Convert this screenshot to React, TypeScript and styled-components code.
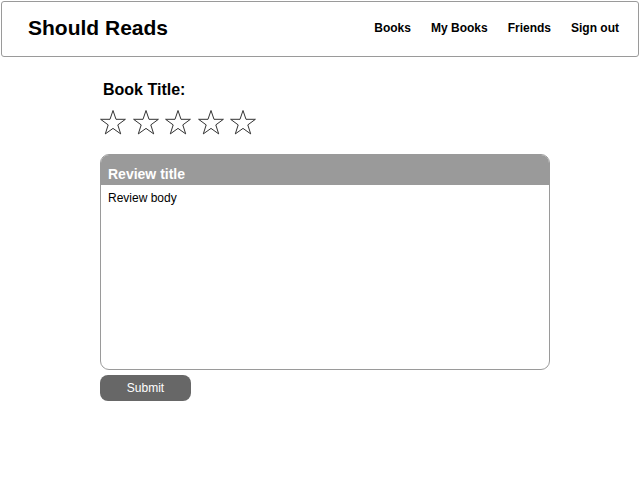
import { createGlobalStyle, styled } from "styled-components";

const GlobalStyle = createGlobalStyle`
  body {
    margin: 0;
    font-family: "Liberation Sans", Arial, sans-serif;
    background: #fff;
    color: #000;
  }
`;

const navItems = ["Books", "My Books", "Friends", "Sign out"];

const Star = () => (
  <svg width="28" height="28" viewBox="0 0 28 28">
    <polygon
      points="14,1.5 17,10.3 26.4,10.3 18.8,15.9 21.7,24.9 14,19.4 6.3,24.9 9.2,15.9 1.6,10.3 11,10.3"
      fill="none"
      stroke="#333"
      strokeWidth="1"
      strokeLinejoin="miter"
    />
  </svg>
);

export default function App() {
  return (
    <>
      <GlobalStyle />
      <Header>
        <Brand>Should Reads</Brand>
        <Nav>
          {navItems.map((item) => (
            <NavItem key={item}>{item}</NavItem>
          ))}
        </Nav>
      </Header>
      <Main>
        <BookTitle>Book Title:</BookTitle>
        <Stars>
          {[0, 1, 2, 3, 4].map((i) => (
            <Star key={i} />
          ))}
        </Stars>
        <ReviewCard>
          <ReviewTitle>Review title</ReviewTitle>
          <ReviewBody>Review body</ReviewBody>
        </ReviewCard>
        <SubmitButton>Submit</SubmitButton>
      </Main>
    </>
  );
}

const Header = styled.header`
  margin: 1px;
  height: 54px;
  border: 1px solid #9a9a9a;
  border-radius: 3px;
  display: flex;
  align-items: center;
  justify-content: space-between;
  padding: 0 19px 0 26px;
`;

const Brand = styled.div`
  font-size: 21px;
  font-weight: bold;
  margin-top: -2px;
`;

const Nav = styled.nav`
  display: flex;
  gap: 20px;
`;

const NavItem = styled.div`
  font-size: 12px;
  font-weight: bold;
  margin-top: -3px;
`;

const Main = styled.main`
  width: 450px;
  margin-left: 100px;
  padding-top: 23px;
`;

const BookTitle = styled.div`
  font-size: 16px;
  font-weight: bold;
  margin-left: 3px;
  line-height: 18px;
`;

const Stars = styled.div`
  display: flex;
  gap: 4.5px;
  margin-top: 10px;
  margin-left: -1px;
`;

const ReviewCard = styled.div`
  margin-top: 17px;
  height: 216px;
  display: flex;
  flex-direction: column;
  border-radius: 9px;
  overflow: hidden;
  border: 1px solid #9a9a9a;
  box-sizing: border-box;
`;

const ReviewTitle = styled.div`
  background: #9a9a9a;
  color: #fff;
  font-size: 14px;
  font-weight: bold;
  height: 30px;
  padding: 11px 7px 0;
  box-sizing: border-box;
`;

const ReviewBody = styled.div`
  flex: 1;
  font-size: 12px;
  padding: 6px 7px;
`;

const SubmitButton = styled.button`
  margin-top: 5px;
  width: 91px;
  height: 26px;
  border: none;
  border-radius: 8px;
  background: #676767;
  color: #fff;
  font-family: "Liberation Sans", Arial, sans-serif;
  font-size: 12px;
  padding: 0;
`;
